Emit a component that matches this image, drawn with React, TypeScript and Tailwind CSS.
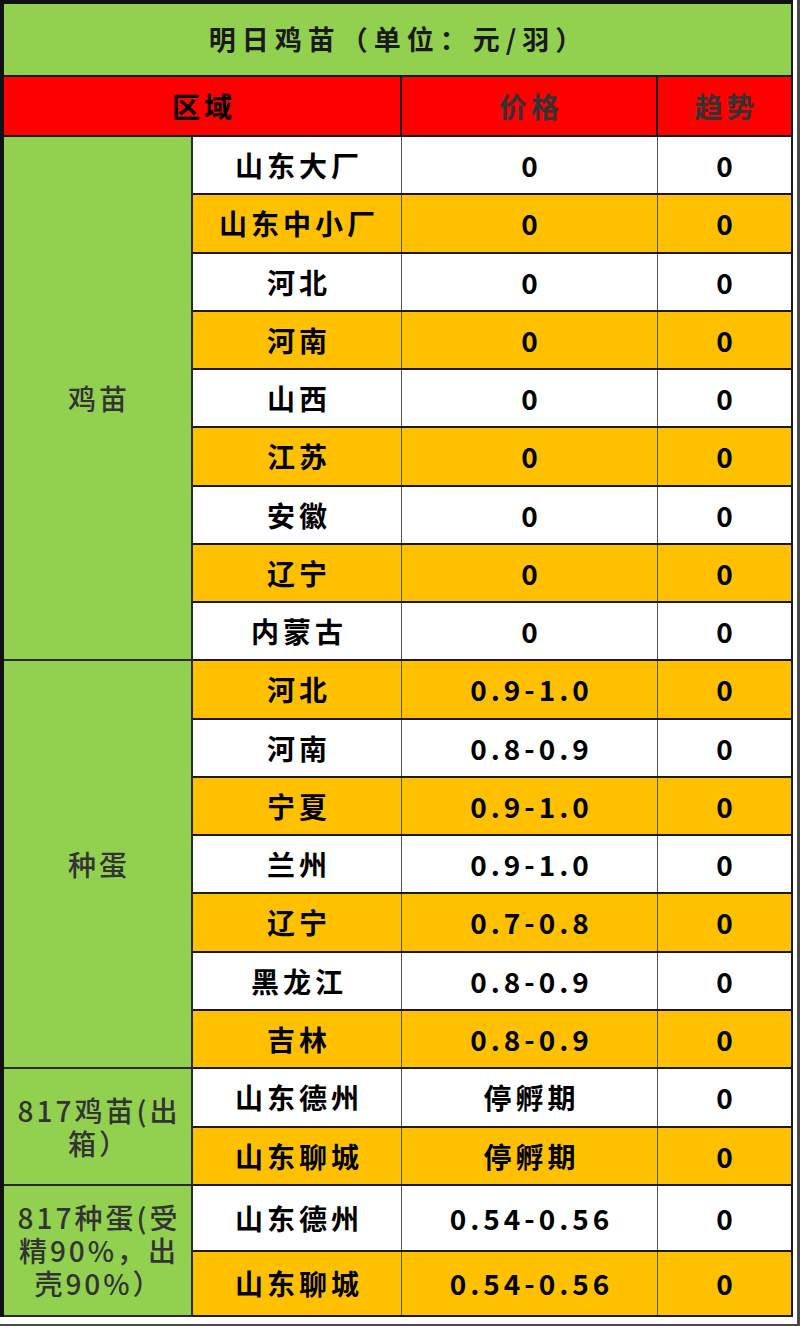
import React from "react";

type Row = { name: string; price: string; trend: string };

const groups: { label: string[]; rows: Row[]; h: string }[] = [
  {
    label: ["鸡苗"],
    h: "h-[58.25px]",
    rows: [
      { name: "山东大厂", price: "0", trend: "0" },
      { name: "山东中小厂", price: "0", trend: "0" },
      { name: "河北", price: "0", trend: "0" },
      { name: "河南", price: "0", trend: "0" },
      { name: "山西", price: "0", trend: "0" },
      { name: "江苏", price: "0", trend: "0" },
      { name: "安徽", price: "0", trend: "0" },
      { name: "辽宁", price: "0", trend: "0" },
      { name: "内蒙古", price: "0", trend: "0" },
    ],
  },
  {
    label: ["种蛋"],
    h: "h-[58.25px]",
    rows: [
      { name: "河北", price: "0.9-1.0", trend: "0" },
      { name: "河南", price: "0.8-0.9", trend: "0" },
      { name: "宁夏", price: "0.9-1.0", trend: "0" },
      { name: "兰州", price: "0.9-1.0", trend: "0" },
      { name: "辽宁", price: "0.7-0.8", trend: "0" },
      { name: "黑龙江", price: "0.8-0.9", trend: "0" },
      { name: "吉林", price: "0.8-0.9", trend: "0" },
    ],
  },
  {
    label: ["817鸡苗(出", "箱）"],
    h: "h-[58.5px]",
    rows: [
      { name: "山东德州", price: "停孵期", trend: "0" },
      { name: "山东聊城", price: "停孵期", trend: "0" },
    ],
  },
  {
    label: ["817种蛋(受", "精90%，出", "壳90%）"],
    h: "h-[65.5px]",
    rows: [
      { name: "山东德州", price: "0.54-0.56", trend: "0" },
      { name: "山东聊城", price: "0.54-0.56", trend: "0" },
    ],
  },
];

const font = { fontFamily: '"Noto Sans CJK SC", "Noto Sans", sans-serif' };

export default function App() {
  return (
    <div className="w-[800px] h-[1327px] bg-white" style={font}>
      <div className="w-[800px] h-[1326px] border-r-[3px] border-b-[2px] border-[#4a4a4a] bg-white">
        <div className="w-[793px] border-t-4 border-l-4 border-[#111] flex flex-col">
          {/* Title */}
          <div className="h-[73px] bg-[#92d050] border-b-2 border-r-2 border-[#1a1a1a] flex items-center justify-center text-[27px] font-bold tracking-[6px] text-[#1a1a1a] pl-[2px]">
            明日鸡苗（单位：元/羽）
          </div>
          {/* Header */}
          <div className="h-[60px] flex bg-[#ff0000] border-b-2 border-[#1a1a1a] text-[28px] font-bold tracking-[4px]">
            <div className="w-[398px] flex items-center justify-center border-r-2 border-[#1a1a1a] text-black pl-[4px]">
              区域
            </div>
            <div className="w-[256px] flex items-center justify-center border-r-2 border-[#1a1a1a] text-[#333] pl-[4px]">
              价格
            </div>
            <div className="w-[135px] flex items-center justify-center border-r-2 border-[#1a1a1a] text-[#333] pl-[4px]">
              趋势
            </div>
          </div>
          {/* Body */}
          {groups.map((g, gi) => {
            let offset = 0;
            for (let k = 0; k < gi; k++) offset += groups[k].rows.length;
            return (
              <div key={gi} className="flex">
                <div className="w-[189px] bg-[#92d050] border-r-2 border-b-2 border-[#2a2a2a] flex flex-col items-center justify-center text-[28px] font-medium tracking-[3px] text-[#333] leading-[33px] pl-[3px]">
                  {g.label.map((l, li) => (
                    <div key={li}>{l}</div>
                  ))}
                </div>
                <div className="flex flex-col">
                  {g.rows.map((r, ri) => {
                    const idx = offset + ri;
                    const bg = idx % 2 === 0 ? "bg-white" : "bg-[#ffc000]";
                    return (
                      <div
                        key={ri}
                        className={`flex ${g.h} ${bg} border-b-2 border-[#1a1a1a] text-[28px] font-bold text-black`}
                      >
                        <div className="w-[209px] flex items-center justify-center border-r border-[#555] tracking-[4px] pl-[4px]">
                          {r.name}
                        </div>
                        <div className="w-[256px] flex items-center justify-center border-r border-[#555] tracking-[4px] pl-[4px]">
                          {r.price}
                        </div>
                        <div className="w-[135px] flex items-center justify-center border-r-2 border-[#1a1a1a]">
                          {r.trend}
                        </div>
                      </div>
                    );
                  })}
                </div>
              </div>
            );
          })}
        </div>
      </div>
    </div>
  );
}
